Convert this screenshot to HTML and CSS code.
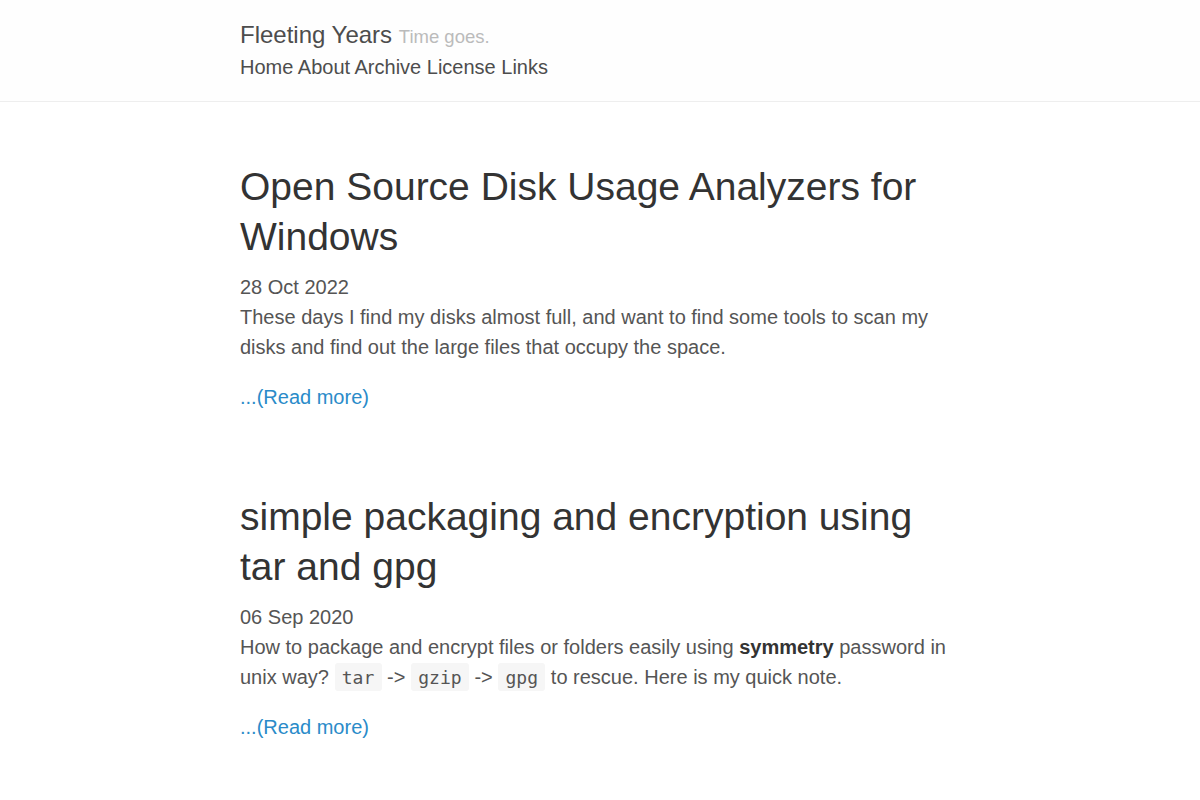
FILE: index.html
```html
<!DOCTYPE html>
<html lang="en">
<head>
<meta charset="utf-8">
<title>Fleeting Years</title>
<link rel="stylesheet" href="styles.css">
</head>
<body>
<header class="site-header">
  <div class="wrap">
    <div class="brand"><a class="site-title" href="#">Fleeting Years</a> <span class="tagline">Time goes.</span></div>
    <nav class="nav"><a href="#">Home</a> <a href="#">About</a> <a href="#">Archive</a> <a href="#">License</a> <a href="#">Links</a></nav>
  </div>
</header>
<main class="wrap content">
  <article class="post">
    <h2 class="post-title">Open Source Disk Usage Analyzers for Windows</h2>
    <div class="post-date">28 Oct 2022</div>
    <p class="post-excerpt">These days I find my disks almost full, and want to find some tools to scan my disks and find out the large files that occupy the space.</p>
    <a class="read-more" href="#">...(Read more)</a>
  </article>
  <article class="post">
    <h2 class="post-title">simple packaging and encryption using tar and gpg</h2>
    <div class="post-date">06 Sep 2020</div>
    <p class="post-excerpt">How to package and encrypt files or folders easily using <strong>symmetry</strong> password in unix way? <code>tar</code> -&gt; <code>gzip</code> -&gt; <code>gpg</code> to rescue. Here is my quick note.</p>
    <a class="read-more" href="#">...(Read more)</a>
  </article>
</main>
</body>
</html>
```

FILE: styles.css
```css
html, body {
  margin: 0;
  padding: 0;
  background: #ffffff;
}
body {
  font-family: "Liberation Sans", Arial, sans-serif;
  font-size: 20px;
  line-height: 30px;
  color: #444;
}
a {
  text-decoration: none;
}
.wrap {
  width: 720px;
  margin: 0 auto;
}
.site-header {
  background: #fefefe;
  border-bottom: 1px solid #eeeeee;
  padding: 20px 0 19px;
}
.brand {
  height: 32px;
  font-size: 24px;
  line-height: 30px;
}
.site-title {
  color: #4d4d4d;
}
.tagline {
  font-size: 18.5px;
  color: #bbbbbb;
}
.nav {
  height: 30px;
}
.nav a {
  color: #4d4d4d;
}
.content {
  padding-top: 60px;
}
.post {
  margin-bottom: 80px;
}
.post-title {
  margin: 0 0 10px;
  font-size: 39px;
  line-height: 50px;
  font-weight: normal;
  color: #333;
}
.post-date {
  color: #555;
}
.post-excerpt {
  margin: 0 0 20px;
  color: #555;
}
.post-excerpt strong {
  color: #333;
}
code {
  font-family: "DejaVu Sans Mono", monospace;
  font-size: 18px;
  line-height: 18px;
  background: #f6f6f6;
  padding: 4px 7.25px 3px;
  border-radius: 3px;
  color: #555;
}
.read-more {
  color: #2a8bc9;
}
```
